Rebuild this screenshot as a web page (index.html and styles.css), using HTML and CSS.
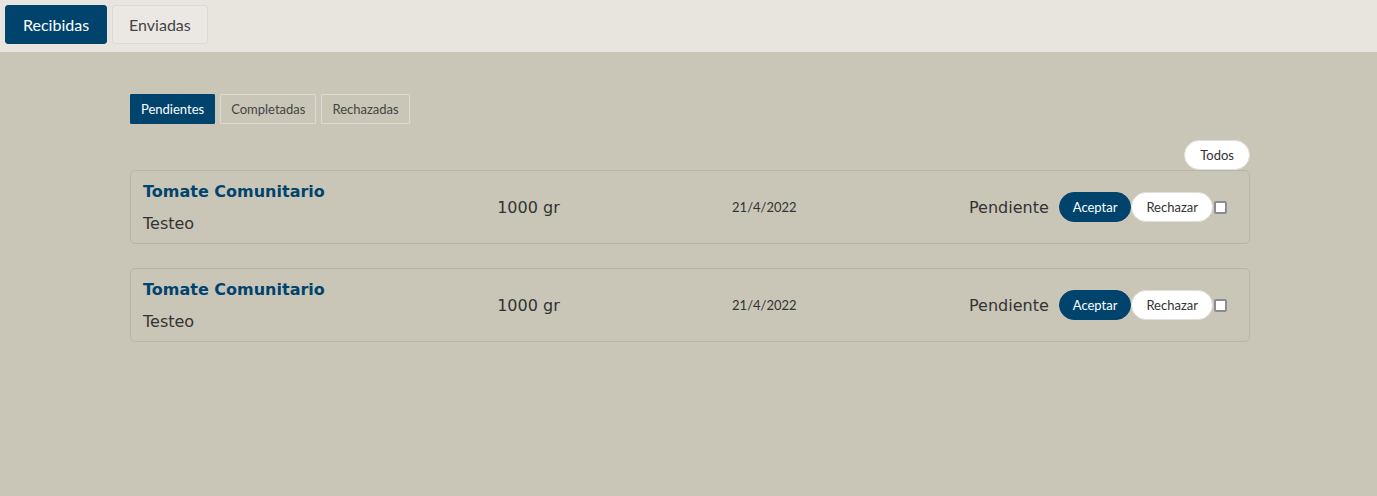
FILE: index.html
```html
<!DOCTYPE html>
<html lang="es">
<head>
<meta charset="utf-8">
<title>Solicitudes</title>
<link rel="stylesheet" href="styles.css">
</head>
<body>
<header class="topbar">
  <button class="tab tab-active">Recibidas</button>
  <button class="tab">Enviadas</button>
</header>
<main class="content">
  <nav class="subtabs">
    <button class="subtab subtab-active">Pendientes</button>
    <button class="subtab">Completadas</button>
    <button class="subtab">Rechazadas</button>
  </nav>
  <div class="toolbar">
    <button class="todos">Todos</button>
  </div>
  <div class="list">
    <div class="card">
      <div class="info">
        <div class="title">Tomate Comunitario</div>
        <div class="desc">Testeo</div>
      </div>
      <div class="qty">1000 gr</div>
      <div class="date">21/4/2022</div>
      <div class="actions">
        <span class="status">Pendiente</span>
        <button class="btn btn-accept">Aceptar</button>
        <button class="btn btn-reject">Rechazar</button>
        <input type="checkbox" class="check">
      </div>
    </div>
    <div class="card">
      <div class="info">
        <div class="title">Tomate Comunitario</div>
        <div class="desc">Testeo</div>
      </div>
      <div class="qty">1000 gr</div>
      <div class="date">21/4/2022</div>
      <div class="actions">
        <span class="status">Pendiente</span>
        <button class="btn btn-accept">Aceptar</button>
        <button class="btn btn-reject">Rechazar</button>
        <input type="checkbox" class="check">
      </div>
    </div>
  </div>
</main>
</body>
</html>
```
FILE: styles.css
```css
* { box-sizing: border-box; }
html, body { margin: 0; padding: 0; }
body {
  background: #c9c6b8;
  font-family: "DejaVu Sans", sans-serif;
  color: #333;
  height: 496px;
}
button { font-family: Lato, "Open Sans", sans-serif; cursor: pointer; }

.topbar {
  background: #e8e5df;
  height: 52px;
  display: flex;
  gap: 5px;
  padding: 5px 5px 0;
}
.tab {
  height: 39px;
  padding: 0 16px;
  font-size: 16px;
  border-radius: 3px;
  border: 1px solid #dcd9d2;
  background: #ebe8e3;
  color: #444;
}
.tab-active {
  background: #00446e;
  border-color: #00446e;
  color: #fff;
  padding: 0 17px;
}

.content {
  padding: 42px 127px 0 130px;
}
.subtabs {
  display: flex;
  gap: 5px;
}
.subtab {
  height: 30px;
  padding: 0 10px;
  font-size: 13px;
  border: 1px solid #dddad2;
  background: #c9c6b8;
  color: #444;
  border-radius: 1px;
}
.subtab-active {
  background: #00446e;
  border-color: #00446e;
  color: #fff;
  padding: 0 10px;
}
.toolbar {
  display: flex;
  justify-content: flex-end;
  margin-top: 16px;
}
.todos {
  height: 30px;
  padding: 0 15px;
  background: #fff;
  border: 1px solid #e2e0da;
  border-radius: 15px;
  font-size: 13px;
  color: #333;
}
.list {
  display: flex;
  flex-direction: column;
  gap: 24px;
}
.card {
  height: 74px;
  border: 1px solid #b7b4a9;
  border-radius: 5px;
  display: flex;
  align-items: center;
  justify-content: space-between;
  padding: 0 22px 0 12px;
}
.info { display: flex; flex-direction: column; gap: 13px; }
.title {
  font-weight: bold;
  font-size: 16px;
  color: #00446e;
}
.desc { font-size: 16px; color: #333; }
.qty { font-size: 16px; color: #333; }
.date {
  font-family: Lato, "Open Sans", sans-serif;
  font-size: 13px;
  color: #333;
}
.actions { display: flex; align-items: center; }
.status { font-size: 16px; color: #333; margin-right: 10px; }
.btn {
  height: 30px;
  border-radius: 15px;
  font-size: 13px;
  padding: 0 13px;
}
.btn-accept {
  background: #00446e;
  border: 1px solid #00446e;
  color: #fff;
}
.btn-reject {
  background: #fff;
  border: 1px solid #e2e0da;
  color: #333;
  padding: 0 14px;
}
.check {
  appearance: none;
  -webkit-appearance: none;
  width: 13px;
  height: 13px;
  margin: 0 0 0 1px;
  border: 2px solid #8a8a98;
  border-radius: 2px;
  background: #fff;
}
```
